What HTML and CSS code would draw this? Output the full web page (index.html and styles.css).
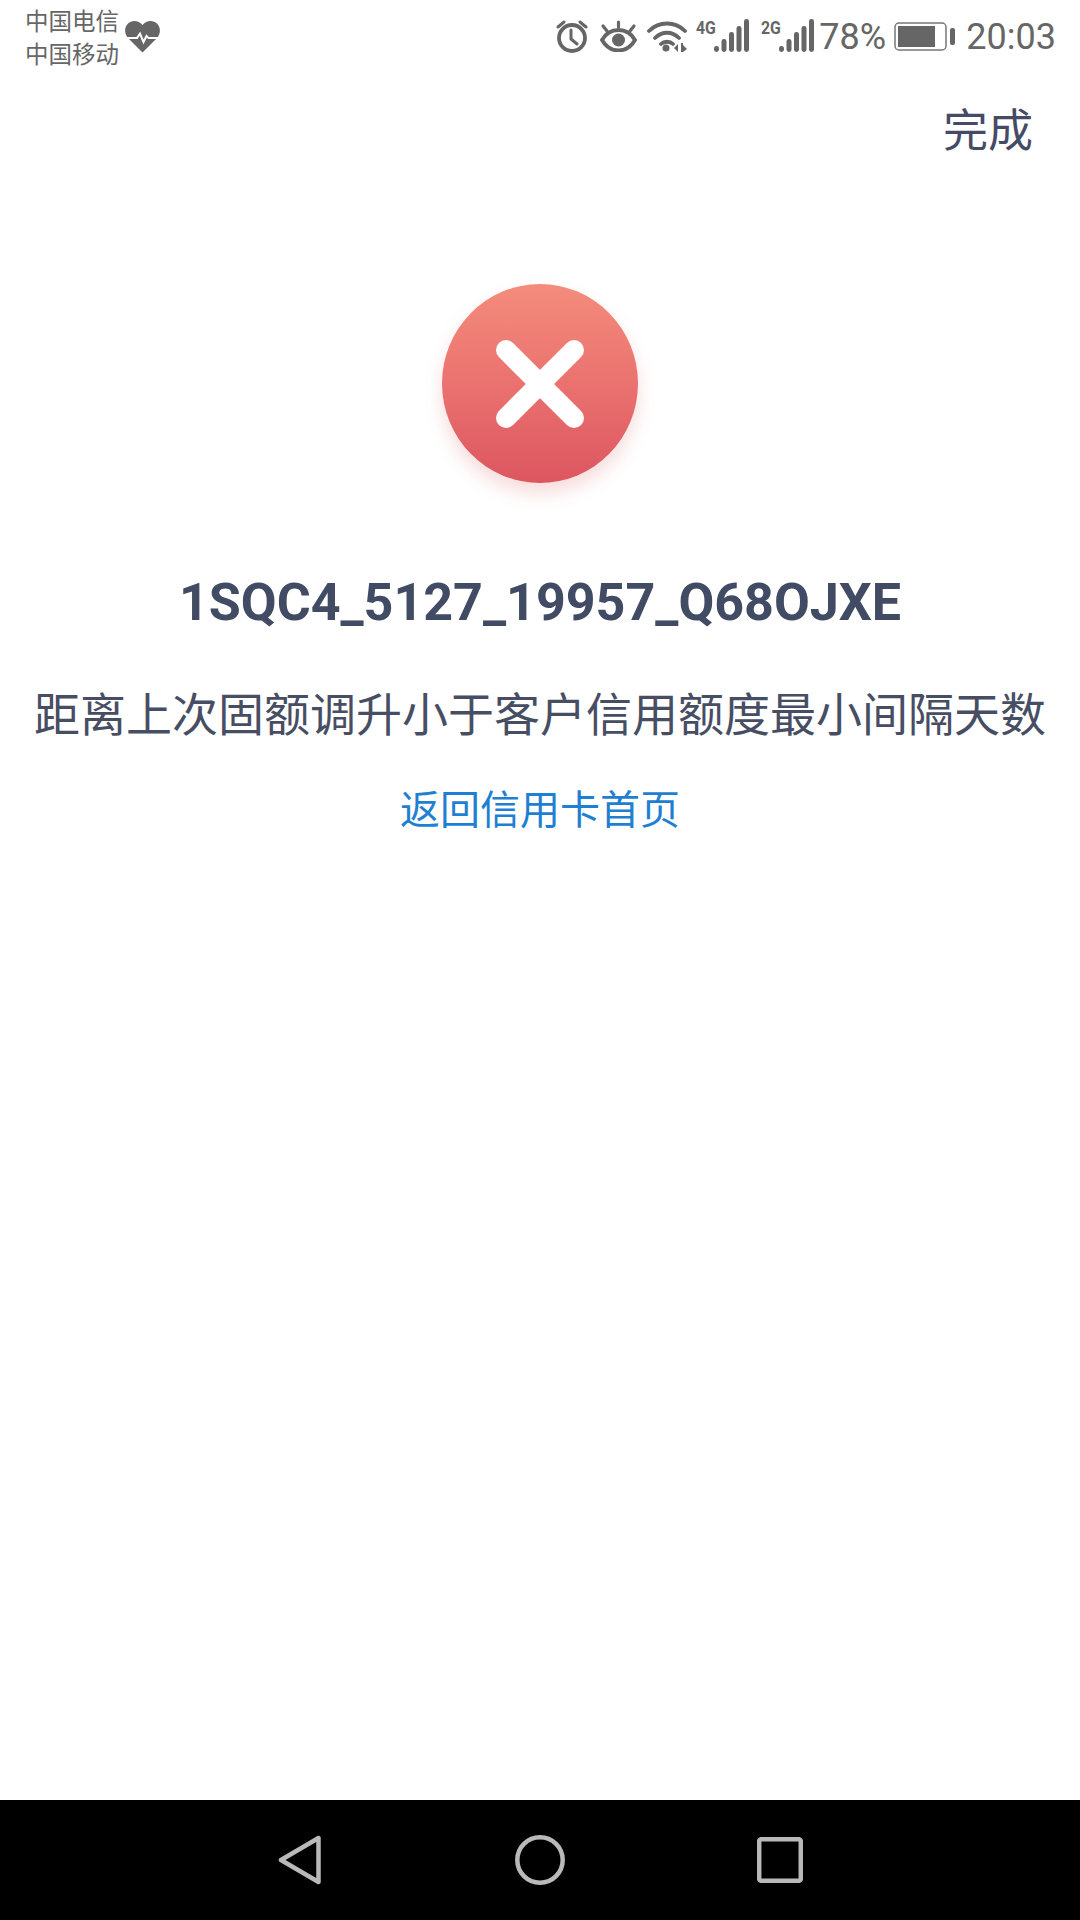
FILE: index.html
```html
<!DOCTYPE html>
<html lang="zh">
<head>
<meta charset="utf-8">
<title>完成</title>
<link rel="stylesheet" href="styles.css">
</head>
<body>
<div class="screen">
  <header class="statusbar">
    <div class="carrier">
      <div class="carrier-names"><span>中国电信</span><span>中国移动</span></div>
      <svg class="heart" viewBox="0 0 35 32"><path fill="#666" d="M17.5 32 3 17.5C-1 13-.6 6.500 2.800 3.200 6.800-.8 13.500-.6 17.500 4.500 21.500-.6 28.200-.8 32.200 3.200 35.600 6.500 36 13 32 17.500Z"/><path fill="none" stroke="#fff" stroke-width="2" d="M0 17.500H12L15 13 18.500 21.500 21.500 15.500 23.500 17.500H35"/></svg>
    </div>
    <div class="indicators">
      <svg class="ic-alarm" viewBox="0 0 32 34"><circle cx="16" cy="19" r="13" fill="none" stroke="#666" stroke-width="3.800"/><path fill="none" stroke="#666" stroke-width="3" stroke-linecap="round" stroke-linejoin="round" d="M15 11v9l6 5M2 8l6-5M30 8l-6-5"/></svg>
      <svg class="ic-eye" viewBox="0 0 37 32"><path fill="none" stroke="#666" stroke-width="3.800" d="M2 20C6 13 12 10 18.500 10S31 13 35 20C31 27 25 30.500 18.500 30.500S6 27 2 20Z"/><circle cx="18.500" cy="20" r="6.500" fill="#666"/><path stroke="#666" stroke-width="3.200" stroke-linecap="round" d="M18.500 2v5M3 6l4 5M34 6l-4 5"/></svg>
      <svg class="ic-wifi" viewBox="0 0 40 33"><path fill="none" stroke="#666" stroke-width="3.800" stroke-linecap="round" d="M2 12C12 2 28 2 38 12M8 19C15 12 25 12 32 19M14 25C17 22 23 22 26 25"/><circle cx="19" cy="29" r="3.500" fill="#666"/><path fill="#666" d="M27 29l4-4v8zM34 24h2v9h-2zM36 26l4 4-4 3z"/></svg>
      <div class="signal">
        <span class="net">4G</span>
        <svg class="bars" viewBox="0 0 35 33"><rect x="0" y="27" width="5" height="6" rx="2.400" fill="#666"/><rect x="7.500" y="20" width="5" height="13" rx="2.400" fill="#666"/><rect x="15" y="13" width="5" height="20" rx="2.400" fill="#666"/><rect x="22.500" y="7" width="5" height="26" rx="2.400" fill="#666"/><rect x="30" y="0" width="5" height="33" rx="2.400" fill="#666"/></svg>
      </div>
      <div class="signal signal-second">
        <span class="net">2G</span>
        <svg class="bars" viewBox="0 0 35 33"><rect x="0" y="27" width="5" height="6" rx="2.400" fill="#666"/><rect x="7.500" y="20" width="5" height="13" rx="2.400" fill="#666"/><rect x="15" y="13" width="5" height="20" rx="2.400" fill="#666"/><rect x="22.500" y="7" width="5" height="26" rx="2.400" fill="#666"/><rect x="30" y="0" width="5" height="33" rx="2.400" fill="#666"/></svg>
      </div>
      <span class="pct">78%</span>
      <svg class="ic-battery" viewBox="0 0 61 29"><rect x="1" y="1" width="51" height="27" rx="4" fill="none" stroke="#777" stroke-width="1.500"/><rect x="4" y="4" width="37" height="21" fill="#666"/><rect x="56" y="6" width="5" height="17" rx="2" fill="#666"/></svg>
      <span class="time">20:03</span>
    </div>
  </header>
  <div class="toolbar"><span class="done">完成</span></div>
  <main class="content">
    <div class="fail-icon">
      <svg class="fail-x" viewBox="0 0 88 88"><path fill="none" stroke="#fff" stroke-width="20" stroke-linecap="round" d="M10 10 78 78M78 10 10 78"/></svg>
    </div>
    <h1 class="code">1SQC4_5127_19957_Q68OJXE</h1>
    <p class="message">距离上次固额调升小于客户信用额度最小间隔天数</p>
    <a class="link">返回信用卡首页</a>
  </main>
  <nav class="navbar">
    <svg class="nav-back" viewBox="0 0 43 50"><path fill="none" stroke="#b9b9b9" stroke-width="4.500" stroke-linejoin="round" d="M40.500 3V47L3 25Z"/></svg>
    <svg class="nav-home" viewBox="0 0 50 50"><circle cx="25" cy="25" r="22.700" fill="none" stroke="#b9b9b9" stroke-width="4.500"/></svg>
    <svg class="nav-recent" viewBox="0 0 46 46"><rect x="2.200" y="2.200" width="41.600" height="41.600" rx="2" fill="none" stroke="#b9b9b9" stroke-width="4.500"/></svg>
  </nav>
</div>
</body>
</html>
```

FILE: styles.css
```css
* { box-sizing: border-box; margin: 0; padding: 0; }
html, body { width: 1080px; height: 1920px; background: #fff; overflow: hidden; }
body { font-family: Roboto, "Noto Sans CJK SC", sans-serif; }
.screen { width: 1080px; height: 1920px; display: flex; flex-direction: column; }

.statusbar { height: 74px; display: flex; justify-content: space-between; align-items: flex-start; padding: 0 24px 0 25px; color: #666; flex: none; }
.carrier { display: flex; align-items: flex-start; }
.carrier-names { display: flex; flex-direction: column; font-family: "Noto Sans CJK SC", sans-serif; font-size: 23.500px; line-height: 33px; padding-top: 4px; }
.heart { width: 35px; height: 33px; margin: 20px 0 0 6px; }
.indicators { display: flex; align-items: flex-start; padding-top: 19px; }
.ic-alarm { width: 32px; height: 34px; }
.ic-eye { width: 37px; height: 32px; margin-left: 12px; margin-top: 1px; }
.ic-wifi { width: 40px; height: 33px; margin-left: 10px; }
.signal { display: flex; align-items: flex-start; width: 54px; margin-left: 9px; height: 33px; }
.signal-second { margin-left: 11px; width: 53px; }
.net { font-family: Roboto, sans-serif; font-weight: 700; font-size: 18px; line-height: 18px; flex: none; width: 18px; transform: scaleX(.88); transform-origin: left top; white-space: nowrap; }
.bars { width: 35px; height: 33px; flex: none; }
.pct { font-size: 36px; line-height: 42px; margin-left: 5px; margin-top: -3px; width: 66px; white-space: nowrap; }
.ic-battery { width: 61px; height: 29px; margin-left: 9px; margin-top: 3px; }
.time { font-size: 36px; line-height: 42px; margin-left: 11px; margin-top: -3px; white-space: nowrap; }

.toolbar { height: 108px; display: flex; justify-content: flex-end; align-items: center; padding-right: 47px; flex: none; }
.done { font-family: "Noto Sans CJK SC", sans-serif; font-size: 45px; line-height: 60px; color: #454b66; }

.content { flex: 1; display: flex; flex-direction: column; align-items: center; padding-top: 102px; }
.fail-icon { width: 196px; height: 199px; border-radius: 50%; background: linear-gradient(180deg, #f48c7c 0%, #e96f6e 55%, #dc5660 100%); box-shadow: 0 10px 18px rgba(225, 90, 90, .22); display: flex; align-items: center; justify-content: center; }
.fail-x { width: 88px; height: 88px; }
.code { margin-top: 84px; font-family: Roboto, sans-serif; font-weight: 700; font-size: 52px; line-height: 72px; color: #424b64; white-space: nowrap; }
.message { margin-top: 39px; font-family: "Noto Sans CJK SC", sans-serif; font-size: 46px; line-height: 66px; color: #474e64; white-space: nowrap; }
.link { margin-top: 35px; font-family: "Noto Sans CJK SC", sans-serif; font-size: 40px; line-height: 56px; color: #1f7fd2; white-space: nowrap; }

.navbar { height: 120px; background: #000; flex: none; display: flex; align-items: flex-start; padding: 35px 0 0 278px; }
.nav-back { width: 43px; height: 50px; }
.nav-home { width: 50px; height: 50px; margin-left: 194px; }
.nav-recent { width: 46px; height: 46px; margin-left: 192px; margin-top: 2px; }
```
